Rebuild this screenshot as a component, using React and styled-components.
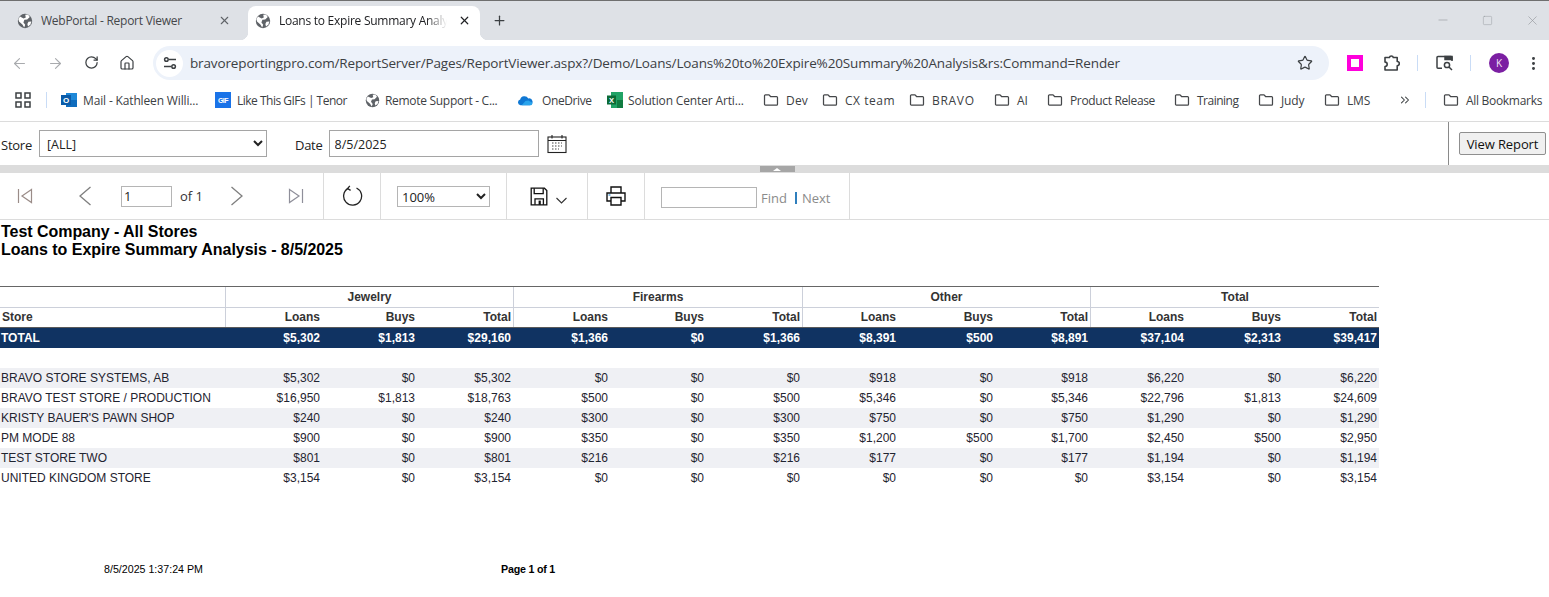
import React from 'react';
import styled, { createGlobalStyle } from 'styled-components';
import {
  ArrowLeft, ArrowRight, RotateCw, House, Star, EllipsisVertical, X, Plus, Minus, Square, ChevronsRight,
} from 'lucide-react';

const GlobalStyle = createGlobalStyle`
  html, body {
    margin: 0;
    padding: 0;
    height: 597px;
    overflow: hidden;
    background: #fff;
  }
  * { box-sizing: border-box; }
`;

const UI_FONT = `"Open Sans", "Noto Sans", sans-serif`;
const REPORT_FONT = `"Liberation Sans", Arial, sans-serif`;

const Page = styled.div`
  width: 1549px;
  height: 597px;
  overflow: hidden;
  font-family: ${UI_FONT};
`;

/* browser chrome */
const TabStrip = styled.div`
  height: 40px;
  background: #dee1e6;
  border-top: 1px solid #6f6f6f;
  display: flex;
  align-items: flex-end;
`;

const Tab = styled.div`
  position: relative;
  width: ${p => p.$w}px;
  height: 34px;
  display: flex;
  align-items: center;
  padding-left: ${p => p.$pad}px;
  padding-bottom: 5px;
  background: ${p => (p.$active ? '#fff' : 'transparent')};
  border-radius: 8px 8px 0 0;
  color: ${p => (p.$active ? '#202124' : '#45474a')};
  font-size: 12px;
  letter-spacing: -0.26px;

  ${p => p.$active && `
    &::before, &::after {
      content: '';
      position: absolute;
      bottom: 0;
      width: 8px;
      height: 8px;
    }
    &::before {
      left: -8px;
      background: radial-gradient(circle at 0 0, transparent 8px, #fff 8.5px);
    }
    &::after {
      right: -8px;
      background: radial-gradient(circle at 100% 0, transparent 8px, #fff 8.5px);
    }
  `}
`;

const TabTitle = styled.span`
  margin-left: 8px;
  width: ${p => p.$w}px;
  white-space: nowrap;
  overflow: hidden;
  mask-image: ${p => (p.$fade ? 'linear-gradient(90deg, #000 88%, transparent)' : 'none')};
`;

const TabClose = styled.span`
  display: flex;
  margin-left: ${p => p.$ml}px;
  color: ${p => p.$color};
`;

const NewTab = styled.span`
  display: flex;
  margin: 0 0 6px 12px;
  color: #3c4043;
  height: 28px;
  align-items: center;
`;

const WindowButtons = styled.div`
  margin-left: auto;
  margin-bottom: 7px;
  display: flex;
  align-items: center;
  height: 26px;
  padding-right: 9px;
  color: #92959a;
  gap: 32px;
`;

const NavBar = styled.div`
  height: 46px;
  background: #fff;
  display: flex;
  align-items: center;
  color: #5f6368;
`;

const NavIcon = styled.span`
  width: 36px;
  display: flex;
  justify-content: center;
  color: ${p => (p.$dim ? '#a9abae' : '#3c4043')};
`;

const NavIcons = styled.div`
  display: flex;
  padding-left: 1px;
`;

const Omnibox = styled.div`
  width: 1176px;
  height: 34px;
  margin-left: 8px;
  border-radius: 17px;
  background: #edf2fa;
  display: flex;
  align-items: center;
  padding-left: 3px;
  padding-right: 16px;
  font-size: 13.5px;
  color: #3c4043;
`;

const SiteBadge = styled.span`
  width: 27px;
  height: 27px;
  border-radius: 50%;
  background: #fff;
  display: flex;
  align-items: center;
  justify-content: center;
  color: #3c4043;
`;

const Url = styled.span`
  margin-left: 7px;
  white-space: nowrap;
  letter-spacing: -0.14px;
  flex: 1;
`;

const ExtArea = styled.div`
  display: flex;
  align-items: center;
  margin-left: 18px;
`;

const PinkBox = styled.span`
  width: 16px;
  height: 16px;
  border: 4px solid #ff00dc;
  background: #fff;
`;

const ExtIcon = styled.span`
  display: flex;
  margin-left: ${p => p.$ml}px;
  color: #3c4043;
`;

const BarSep = styled.span`
  width: 1px;
  height: 16px;
  margin-left: ${p => p.$ml}px;
  background: #c9dcf6;
`;

const Avatar = styled.span`
  width: 20px;
  height: 20px;
  margin-left: 18px;
  border-radius: 50%;
  background: #7b1fa2;
  color: #f3e5f5;
  font-size: 10px;
  display: flex;
  align-items: center;
  justify-content: center;
`;

const BookmarkBar = styled.div`
  height: 35px;
  display: flex;
  align-items: center;
  padding-left: 15px;
  padding-bottom: 7px;
`;

const Bookmark = styled.div`
  width: ${p => p.$w}px;
  flex: none;
  display: flex;
  align-items: center;
  gap: ${p => p.$gap || 7}px;
  font-size: 12px;
  color: #3c4043;
  letter-spacing: ${p => p.$ls ?? -0.15}px;
  white-space: nowrap;
`;

const BookmarkIcon = styled.span`
  display: flex;
  width: 16px;
  justify-content: center;
  flex: none;
  color: #45474a;
`;

/* report viewer parameters */
const ParamArea = styled.div`
  height: 44px;
  border-top: 1px solid #dcdcdc;
  display: flex;
  align-items: center;
  font-size: 13px;
  color: #222;
`;

const ParamLabel = styled.label`
  margin-left: ${p => p.$ml}px;
  padding-top: 2px;
  letter-spacing: -0.25px;
`;

const StoreSelect = styled.select`
  width: 228px;
  height: 27px;
  margin-left: 7px;
  border: 1px solid #a5a5a5;
  background: #fff;
  border-radius: 0;
  font: 12.5px ${UI_FONT};
  color: #222;
  padding: 2px 0 0 3px;
`;

const DateInput = styled.input`
  width: 210px;
  height: 27px;
  margin-left: 6px;
  border: 1px solid #a5a5a5;
  font: 12.5px ${UI_FONT};
  color: #222;
  padding: 2px 5px 0;
`;

const CalIcon = styled.span`
  display: flex;
  margin-left: 8px;
`;

const ViewArea = styled.div`
  margin-left: auto;
  width: 101px;
  height: 100%;
  border-left: 1px solid #8a8a8a;
  display: flex;
  align-items: center;
  padding-left: 10px;
`;

const ViewButton = styled.button`
  width: 87px;
  height: 23px;
  border: 1px solid #8f8f8f;
  border-radius: 2px;
  background: #f0f0f0;
  font: 13px ${UI_FONT};
  letter-spacing: -0.1px;
  color: #111;
  padding: 0;
`;

const Splitter = styled.div`
  height: 8px;
  background: #dcdcdc;
  display: flex;
  justify-content: center;
  padding-left: 5px;
`;

const SplitterGrip = styled.span`
  width: 35px;
  height: 6px;
  margin-top: 1px;
  background: #a6a6a6;
  display: flex;
  align-items: center;
  justify-content: center;
  &::after {
    content: '';
    border-left: 4px solid transparent;
    border-right: 4px solid transparent;
    border-bottom: 3px solid #fff;
  }
`;

/* report toolbar */
const Toolbar = styled.div`
  height: 47px;
  display: flex;
  border-bottom: 1px solid #dcdcdc;
  color: #333;
  font-size: 13px;
`;

const Segment = styled.div`
  width: ${p => p.$w}px;
  flex: none;
  display: flex;
  align-items: center;
  padding-left: ${p => p.$pad || 0}px;
  border-right: 1px solid #dcdcdc;
`;

const ToolIcon = styled.span`
  display: flex;
  margin-left: ${p => p.$ml || 0}px;
  margin-top: ${p => p.$mt || 0}px;
`;

const PageInput = styled.input`
  width: 51px;
  height: 21px;
  margin-left: 29px;
  border: 1px solid #b5b5b5;
  padding: 0 2px;
  font: 13px ${UI_FONT};
  color: #222;
`;

const OfText = styled.span`
  margin-left: 8px;
  color: #333;
`;

const ZoomSelect = styled.select`
  width: 93px;
  height: 21px;
  border: 1px solid #b5b5b5;
  background: #fff;
  border-radius: 0;
  font: 13px ${UI_FONT};
  color: #222;
`;

const FindInput = styled.input`
  width: 96px;
  height: 21px;
  margin-top: 2px;
  border: 1px solid #b5b5b5;
  padding: 0 2px;
`;

const FindLink = styled.span`
  margin-left: ${p => p.$ml}px;
  margin-top: 4px;
  color: #8b8b8b;
  font-size: 13px;
`;

const FindSep = styled.span`
  width: 2px;
  height: 12px;
  margin-left: 8px;
  margin-top: 4px;
  background: #2f7fbd;
`;

/* report body */
const Report = styled.div`
  padding-top: 3px;
  font-family: ${REPORT_FONT};
  color: #000;
`;

const ReportTitle = styled.div`
  padding-left: 1px;
  font-size: 16px;
  line-height: 18px;
  font-weight: 700;
  letter-spacing: -0.04px;
`;

const Table = styled.div`
  width: 1379px;
  margin-top: 27px;
`;

const COLS = '225px 97px 95px 96px 97px 96px 96px 96px 97px 95px 96px 97px 96px';

const GroupRow = styled.div`
  height: 22px;
  display: grid;
  grid-template-columns: 225px 288px 289px 288px 289px;
  border-top: 1px solid #666;
  border-bottom: 1px solid #ccd0da;
`;

const GroupCell = styled.div`
  border-left: ${p => (p.$first ? 'none' : '1px solid #ccd0da')};
  text-align: center;
  font-size: 12px;
  line-height: 20px;
  font-weight: 700;
  color: #333;
`;

const HeadRow = styled.div`
  height: 20px;
  display: grid;
  grid-template-columns: ${COLS};
  border-bottom: 1px solid #5a5a5a;
`;

const HeadCell = styled.div`
  font-size: 12px;
  line-height: 19px;
  font-weight: 700;
  color: #333;
  text-align: ${p => (p.$left ? 'left' : 'right')};
  padding: ${p => (p.$left ? '0 0 0 2px' : '0 2px 0 0')};
  border-left: ${p => (p.$div ? '1px solid #ccd0da' : 'none')};
`;

const Row = styled.div`
  height: 20px;
  display: grid;
  grid-template-columns: ${COLS};
  background: ${p => p.$bg || '#fff'};
  color: ${p => p.$color || '#1f2430'};
  font-weight: ${p => (p.$bold ? 700 : 400)};
  margin-bottom: ${p => p.$mb || 0}px;
`;

const Cell = styled.div`
  font-size: 12px;
  line-height: 20px;
  white-space: nowrap;
  text-align: ${p => (p.$left ? 'left' : 'right')};
  padding: ${p => (p.$left ? '0 0 0 1px' : '0 2px 0 0')};
`;

const ReportFooter = styled.div`
  margin-top: 74px;
  padding-left: 104px;
  display: flex;
  font-size: 10.67px;
  line-height: 14px;
`;

const PrintedAt = styled.span`
  width: 397px;
`;

const PageNo = styled.span`
  font-weight: 700;
  letter-spacing: -0.2px;
`;

/* drawn icons */
const Globe = ({ size = 16 }) => (
  <svg width={size} height={size} viewBox="0 0 16 16">
    <circle cx="8" cy="8" r="7.2" fill="#5f6368" />
    <path d="M3 3.6 6.6 5.4 8.8 4.4 8.2 1.8 11 1.6 12.8 4 10.2 6.6 7.4 6.8 6.4 9.4 8.2 11.8 7.2 14.4 5.4 11.4 2 8.6 1.4 6Z" fill="#fff" />
    <path d="M11.4 8.8 14.4 8.4 13.4 11.6 11 13.4 10.4 11Z" fill="#fff" />
  </svg>
);

const FolderIcon = () => (
  <svg width="18" height="16" viewBox="0 0 18 16" fill="none" stroke="#45474a" strokeWidth="1.4" strokeLinejoin="round">
    <path d="M1.7 3.2a1 1 0 0 1 1-1h4.1l1.7 1.9h6.8a1 1 0 0 1 1 1v7.7a1 1 0 0 1-1 1H2.7a1 1 0 0 1-1-1Z" />
  </svg>
);

const AppsIcon = () => (
  <svg width="16" height="16" viewBox="0 0 16 16" fill="none" stroke="#3c4043" strokeWidth="1.5">
    <rect x="1" y="1" width="5" height="5" /><rect x="10" y="1" width="5" height="5" />
    <rect x="1" y="10" width="5" height="5" /><rect x="10" y="10" width="5" height="5" />
  </svg>
);

const TuneIcon = () => (
  <svg width="16" height="16" viewBox="0 0 16 16" fill="none" stroke="#3c4043" strokeWidth="1.5">
    <circle cx="4.4" cy="4.5" r="1.8" /><path d="M7 4.5h7" />
    <circle cx="11.6" cy="11.5" r="1.8" /><path d="M2 11.5h7" />
  </svg>
);

const OutlookIcon = () => (
  <svg width="16" height="16" viewBox="0 0 16 16">
    <rect x="5" y="1" width="11" height="14" fill="#1e88d8" />
    <path d="M5 8h11v7H5z" fill="#0f6cbd" />
    <rect x="0" y="3" width="10" height="10" fill="#0a5ba8" />
    <text x="5" y="11" fontSize="8" fontWeight="700" fill="#fff" textAnchor="middle" fontFamily="Liberation Sans">O</text>
  </svg>
);

const GifIcon = () => (
  <svg width="16" height="16" viewBox="0 0 16 16">
    <rect width="16" height="16" fill="#1a73e8" />
    <text x="8" y="11" fontSize="7" fontWeight="700" fill="#fff" textAnchor="middle" fontFamily="Liberation Sans">GIF</text>
  </svg>
);

const CloudIcon = () => (
  <svg width="17" height="12" viewBox="0 0 17 12">
    <path d="M3.6 11.5A3 3 0 0 1 3.4 5.6 4.6 4.6 0 0 1 12 4.4a3.6 3.6 0 0 1 1.7 7.1Z" fill="#0f78d4" />
    <path d="M5 11.5 9 7l3-.6 4.4 2.4a2.6 2.6 0 0 1-2.6 2.7Z" fill="#2aa4ec" />
  </svg>
);

const ExcelIcon = () => (
  <svg width="16" height="16" viewBox="0 0 16 16">
    <rect x="4" y="0" width="12" height="16" fill="#21a366" />
    <rect x="10" y="8" width="6" height="8" fill="#107c41" />
    <rect x="0" y="3.5" width="9" height="9" fill="#0b6b36" />
    <text x="4.5" y="10.8" fontSize="7.5" fontWeight="700" fill="#fff" textAnchor="middle" fontFamily="Liberation Sans">X</text>
  </svg>
);

const PuzzleIcon = () => (
  <svg width="18" height="18" viewBox="0 0 18 18" fill="none" stroke="#3c4043" strokeWidth="1.6" strokeLinejoin="round">
    <path d="M3 16v-3.5a2.2 2.2 0 0 0 0-4.4V3.5h4.4a2 2 0 0 1 3.9 0h3.9v4a2 2 0 0 1 0 4.2V16Z" />
  </svg>
);

const TabSearchIcon = () => (
  <svg width="18" height="16" viewBox="0 0 18 16" fill="none" stroke="#3c4043" strokeWidth="1.5">
    <path d="M6 13.2H2a1 1 0 0 1-1-1V2.4a1 1 0 0 1 1-1h13a1 1 0 0 1 1 1V6" />
    <path d="M9 1.6h7v3H9z" fill="#3c4043" />
    <circle cx="11" cy="10" r="2.6" /><path d="m13 12 3 3" />
  </svg>
);

const CalendarIcon = () => (
  <svg width="20" height="20" viewBox="0 0 20 20" fill="none" stroke="#222" strokeWidth="1.1">
    <rect x="1" y="3" width="18" height="15.5" />
    <path d="M1 6.5h18M5 1v3.5M15 1v3.5" />
    <path d="M5 9h10M5 12h10M5 15h7" strokeDasharray="1.5 1.5" stroke="#444" />
  </svg>
);

const FirstIcon = () => (
  <svg width="16" height="16" viewBox="0 0 16 16" fill="none" stroke="#9a8c88" strokeWidth="1.2">
    <path d="M1.5 1v14M14.5 1.5 5 8l9.5 6.5Z" />
  </svg>
);

const LastIcon = () => (
  <svg width="16" height="16" viewBox="0 0 16 16" fill="none" stroke="#8f8f9a" strokeWidth="1.2">
    <path d="M14.5 1v14M1.5 1.5 11 8l-9.5 6.5Z" />
  </svg>
);

const PrevIcon = () => (
  <svg width="14" height="22" viewBox="0 0 14 22" fill="none" stroke="#7f7f7f" strokeWidth="1.3">
    <path d="M12.5 2 2 11l10.5 9" />
  </svg>
);

const NextIcon = () => (
  <svg width="14" height="22" viewBox="0 0 14 22" fill="none" stroke="#7f7f7f" strokeWidth="1.3">
    <path d="M1.5 2 12 11 1.5 20" />
  </svg>
);

const RefreshIcon = () => (
  <svg width="22" height="22" viewBox="0 0 22 22" fill="none" stroke="#222" strokeWidth="1.3">
    <path d="M7 3.4A9 9 0 1 0 15.5 3" />
    <path d="M8.8 0.8 6.6 3.6l3 1.8" />
  </svg>
);

const SaveIcon = () => (
  <svg width="18" height="19" viewBox="0 0 18 19" fill="none" stroke="#111" strokeWidth="1.3">
    <path d="M1.2 1.2h13.2l2.4 2.4v14.2H1.2Z" />
    <path d="M4.2 1.2v5.4h9V1.2" />
    <path d="M5 17.8v-6h8.4v6" />
    <path d="M8.6 13.6h2.2v4.2H8.6Z" fill="#111" stroke="none" />
  </svg>
);

const CaretIcon = () => (
  <svg width="11" height="7" viewBox="0 0 11 7" fill="none" stroke="#333" strokeWidth="1.1">
    <path d="M.5 1 5.5 6l5-5" />
  </svg>
);

const PrintIcon = () => (
  <svg width="20" height="20" viewBox="0 0 20 20" fill="none" stroke="#111" strokeWidth="1.4">
    <path d="M5 7V1h10v6" />
    <path d="M5 15H1V7h18v8h-4" />
    <path d="M5 11.5h10V19H5Z" />
    <path d="M2.5 9h2" stroke="#4a9bd8" />
  </svg>
);

const bookmarks = [
  { w: 154, icon: <OutlookIcon />, label: 'Mail - Kathleen Willi...', gap: 6 },
  { w: 149, icon: <GifIcon />, label: 'Like This GIFs | Tenor', gap: 6, ls: -0.5 },
  { w: 153, icon: <Globe size={15} />, label: 'Remote Support - C...', gap: 5, ls: -0.3 },
  { w: 90, icon: <CloudIcon />, label: 'OneDrive', gap: 9, ls: -0.4 },
  { w: 156, icon: <ExcelIcon />, label: 'Solution Center Arti...', gap: 5 },
  { w: 59, folder: true, label: 'Dev', ls: 0.2 },
  { w: 87, folder: true, label: 'CX team', ls: 0.55 },
  { w: 85, folder: true, label: 'BRAVO', ls: 0.7 },
  { w: 53, folder: true, label: 'AI' },
  { w: 127, folder: true, label: 'Product Release', ls: -0.35 },
  { w: 84, folder: true, label: 'Training', ls: -0.5 },
  { w: 66, folder: true, label: 'Judy' },
  { w: 74, folder: true, label: 'LMS' },
];

const groups = ['Jewelry', 'Firearms', 'Other', 'Total'];
const subHeads = ['Loans', 'Buys', 'Total'];

const totalRow = ['TOTAL', '$5,302', '$1,813', '$29,160', '$1,366', '$0', '$1,366', '$8,391', '$500', '$8,891', '$37,104', '$2,313', '$39,417'];

const rows = [
  ['BRAVO STORE SYSTEMS, AB', '$5,302', '$0', '$5,302', '$0', '$0', '$0', '$918', '$0', '$918', '$6,220', '$0', '$6,220'],
  ['BRAVO TEST STORE / PRODUCTION', '$16,950', '$1,813', '$18,763', '$500', '$0', '$500', '$5,346', '$0', '$5,346', '$22,796', '$1,813', '$24,609'],
  ["KRISTY BAUER'S PAWN SHOP", '$240', '$0', '$240', '$300', '$0', '$300', '$750', '$0', '$750', '$1,290', '$0', '$1,290'],
  ['PM MODE 88', '$900', '$0', '$900', '$350', '$0', '$350', '$1,200', '$500', '$1,700', '$2,450', '$500', '$2,950'],
  ['TEST STORE TWO', '$801', '$0', '$801', '$216', '$0', '$216', '$177', '$0', '$177', '$1,194', '$0', '$1,194'],
  ['UNITED KINGDOM STORE', '$3,154', '$0', '$3,154', '$0', '$0', '$0', '$0', '$0', '$0', '$3,154', '$0', '$3,154'],
];

export default function App() {
  return (
    <Page>
      <GlobalStyle />
      <TabStrip>
        <Tab $w={248} $pad={17}>
          <Globe />
          <TabTitle $w={160}>WebPortal - Report Viewer</TabTitle>
          <TabClose $ml={17} $color="#5f6368"><X size={13} strokeWidth={2} /></TabClose>
        </Tab>
        <Tab $w={232} $pad={7} $active>
          <Globe />
          <TabTitle $w={168} $fade>Loans to Expire Summary Analysis</TabTitle>
          <TabClose $ml={11} $color="#202124"><X size={13} strokeWidth={2.2} /></TabClose>
        </Tab>
        <NewTab><Plus size={15} strokeWidth={2} /></NewTab>
        <WindowButtons>
          <Minus size={14} strokeWidth={1} />
          <Square size={11} strokeWidth={1} />
          <X size={15} strokeWidth={1} />
        </WindowButtons>
      </TabStrip>

      <NavBar>
        <NavIcons>
          <NavIcon $dim><ArrowLeft size={17} strokeWidth={1.6} /></NavIcon>
          <NavIcon $dim><ArrowRight size={17} strokeWidth={1.6} /></NavIcon>
          <NavIcon><RotateCw size={15} strokeWidth={2} /></NavIcon>
          <NavIcon><House size={16} strokeWidth={1.8} /></NavIcon>
        </NavIcons>
        <Omnibox>
          <SiteBadge><TuneIcon /></SiteBadge>
          <Url>bravoreportingpro.com/ReportServer/Pages/ReportViewer.aspx?/Demo/Loans/Loans%20to%20Expire%20Summary%20Analysis&amp;rs:Command=Render</Url>
          <Star size={16} strokeWidth={1.8} color="#3c4043" />
        </Omnibox>
        <ExtArea>
          <PinkBox />
          <ExtIcon $ml={19}><PuzzleIcon /></ExtIcon>
          <BarSep $ml={17} />
          <ExtIcon $ml={18}><TabSearchIcon /></ExtIcon>
          <BarSep $ml={16} />
          <Avatar>K</Avatar>
          <ExtIcon $ml={16}><EllipsisVertical size={17} strokeWidth={2.2} /></ExtIcon>
        </ExtArea>
      </NavBar>

      <BookmarkBar>
        <Bookmark $w={31}><AppsIcon /></Bookmark>
        <Bookmark $w={15}><BarSep $ml={0} /></Bookmark>
        {bookmarks.map(b => (
          <Bookmark key={b.label} $w={b.w} $gap={b.gap} $ls={b.ls}>
            <BookmarkIcon>{b.folder ? <FolderIcon /> : b.icon}</BookmarkIcon>
            <span>{b.label}</span>
          </Bookmark>
        ))}
        <Bookmark $w={27}><ChevronsRight size={14} strokeWidth={1.8} /></Bookmark>
        <Bookmark $w={18}><BarSep $ml={0} /></Bookmark>
        <Bookmark $w={110} $ls={-0.3}>
          <BookmarkIcon><FolderIcon /></BookmarkIcon>
          <span>All Bookmarks</span>
        </Bookmark>
      </BookmarkBar>

      <ParamArea>
        <ParamLabel $ml={1}>Store</ParamLabel>
        <StoreSelect defaultValue="all">
          <option value="all">[ALL]</option>
        </StoreSelect>
        <ParamLabel $ml={28}>Date</ParamLabel>
        <DateInput defaultValue="8/5/2025" />
        <CalIcon><CalendarIcon /></CalIcon>
        <ViewArea><ViewButton>View Report</ViewButton></ViewArea>
      </ParamArea>
      <Splitter><SplitterGrip /></Splitter>

      <Toolbar>
        <Segment $w={324} $pad={17}>
          <ToolIcon><FirstIcon /></ToolIcon>
          <ToolIcon $ml={45}><PrevIcon /></ToolIcon>
          <PageInput defaultValue="1" />
          <OfText>of 1</OfText>
          <ToolIcon $ml={27}><NextIcon /></ToolIcon>
          <ToolIcon $ml={44}><LastIcon /></ToolIcon>
        </Segment>
        <Segment $w={57} $pad={17}>
          <ToolIcon><RefreshIcon /></ToolIcon>
        </Segment>
        <Segment $w={126} $pad={16}>
          <ZoomSelect defaultValue="100%">
            <option>100%</option>
          </ZoomSelect>
        </Segment>
        <Segment $w={81} $pad={23}>
          <ToolIcon><SaveIcon /></ToolIcon>
          <ToolIcon $ml={8} $mt={8}><CaretIcon /></ToolIcon>
        </Segment>
        <Segment $w={57} $pad={18}>
          <ToolIcon><PrintIcon /></ToolIcon>
        </Segment>
        <Segment $w={205} $pad={16}>
          <FindInput />
          <FindLink $ml={4}>Find</FindLink>
          <FindSep />
          <FindLink $ml={5}>Next</FindLink>
        </Segment>
      </Toolbar>

      <Report>
        <ReportTitle>Test Company - All Stores</ReportTitle>
        <ReportTitle>Loans to Expire Summary Analysis - 8/5/2025</ReportTitle>
        <Table>
          <GroupRow>
            <GroupCell $first />
            {groups.map(g => <GroupCell key={g}>{g}</GroupCell>)}
          </GroupRow>
          <HeadRow>
            <HeadCell $left>Store</HeadCell>
            {groups.flatMap(g => subHeads.map((h, i) => (
              <HeadCell key={g + h} $div={i === 0}>{h}</HeadCell>
            )))}
          </HeadRow>
          <Row $bg="#103362" $color="#fff" $bold $mb={20}>
            {totalRow.map((v, i) => <Cell key={i} $left={i === 0}>{v}</Cell>)}
          </Row>
          {rows.map((r, idx) => (
            <Row key={r[0]} $bg={idx % 2 === 0 ? '#eff0f4' : '#fff'}>
              {r.map((v, i) => <Cell key={i} $left={i === 0}>{v}</Cell>)}
            </Row>
          ))}
        </Table>
        <ReportFooter>
          <PrintedAt>8/5/2025 1:37:24 PM</PrintedAt>
          <PageNo>Page 1 of 1</PageNo>
        </ReportFooter>
      </Report>
    </Page>
  );
}
